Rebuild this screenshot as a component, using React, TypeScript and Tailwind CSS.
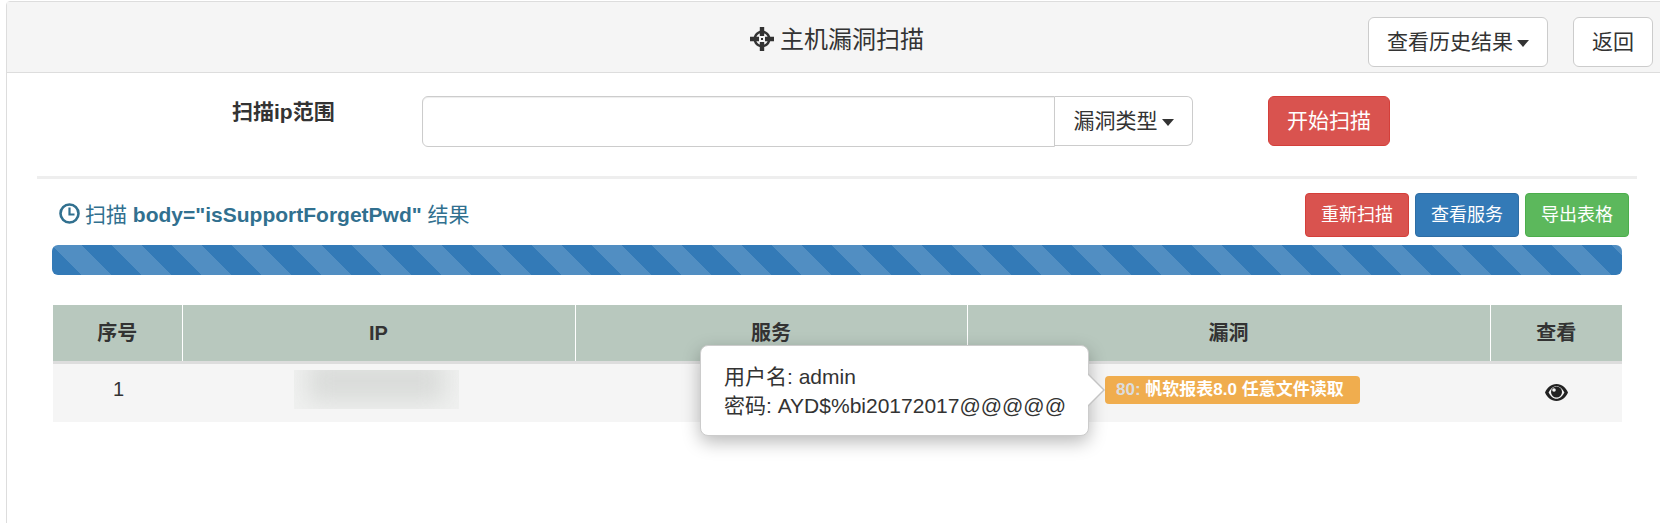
import { ReactNode } from 'react'

const FONT = "font-['Liberation_Sans','Noto_Sans_CJK_SC',sans-serif]"

function Caret() {
  return <span className="ml-1 inline-block w-0 h-0 align-middle border-x-[6px] border-x-transparent border-t-[7px] border-t-[#333]" />
}

function TargetIcon() {
  return (
    <svg width="24" height="24" viewBox="0 0 24 24" className="mt-[3px] shrink-0" fill="#333">
      <path fillRule="evenodd" d="M12 3.500a8.500 8.500 0 1 0 .01 0zM12 6a6 6 0 1 1-.01 0z" />
      <path d="M9.800 0h4.400v9h-4.400zM9.800 15h4.400v9h-4.400zM0 9.800h9v4.400H0zM15 9.800h9v4.400h-9z" />
      <rect x="11" y="11" width="2" height="2" />
    </svg>
  )
}

function ClockIcon() {
  return (
    <svg width="21" height="21" viewBox="0 0 21 21" fill="none" stroke="#31708f" className="mb-[3px] shrink-0">
      <circle cx="10.500" cy="10.500" r="9" strokeWidth="2.600" />
      <path d="M10.500 4.500V11.500H15.500" strokeWidth="2.200" />
    </svg>
  )
}

function EyeIcon() {
  return (
    <svg width="23" height="17" viewBox="0 0 23 17" fill="#222">
      <path fillRule="evenodd" d="M11.500 0C17 0 21 4 23 8.500 21 13 17 17 11.500 17S2 13 0 8.500C2 4 6 0 11.500 0zM11.500 2.200C8 2.200 5.500 4.800 3.600 8.500 5.500 12.200 8 14.800 11.500 14.800S17.500 12.200 19.400 8.500C17.500 4.800 15 2.200 11.500 2.200z" />
      <circle cx="11.500" cy="8" r="5.500" />
      <circle cx="9" cy="6" r="1.800" fill="#f5f5f5" />
    </svg>
  )
}

function ActionButton({ className, children }: { className: string; children: ReactNode }) {
  return (
    <button className={`h-[44px] w-[104px] rounded border text-lg text-white ${className}`}>
      {children}
    </button>
  )
}

const COLUMNS = [
  { label: '序号', width: 'w-[129px]' },
  { label: 'IP', width: 'w-[393px]' },
  { label: '服务', width: 'w-[392px]' },
  { label: '漏洞', width: 'w-[523px]' },
  { label: '查看', width: 'w-[132px]' },
]

export default function App() {
  return (
    <div className={`h-[523px] w-[1660px] overflow-hidden bg-white pl-[6px] pt-px text-[21px] text-[#333] ${FONT}`}>
      <div className="h-[600px] w-[1700px] rounded-tl border border-[#ddd]">
        {/* Heading */}
        <div className="relative flex h-[71px] items-center border-b border-[#ddd] bg-[#f5f5f5] pl-[743px]">
          <TargetIcon />
          <h1 className="ml-[6px] mt-[6px] text-2xl leading-none">主机漏洞扫描</h1>
          <div className="absolute left-[1361px] top-[15px] flex gap-[25px]">
            <button className="h-[50px] w-[180px] rounded-md border border-[#ccc] bg-white">
              查看历史结果
              <Caret />
            </button>
            <button className="h-[50px] w-[80px] rounded-md border border-[#ccc] bg-white">返回</button>
          </div>
        </div>

        {/* Scan form */}
        <div className="flex h-[103px] items-start pt-[23px]">
          <div className="ml-[225px] w-[190px] font-bold leading-[32px]">扫描ip范围</div>
          <input className="h-[51px] w-[633px] rounded-l-md border border-[#ccc] bg-white shadow-[inset_0_1px_1px_rgba(0,0,0,0.075)] outline-none" />
          <button className="h-[50px] w-[138px] rounded-r-md border border-l-0 border-[#ccc] bg-white">
            漏洞类型
            <Caret />
          </button>
          <button className="ml-[75px] h-[50px] w-[122px] rounded-md border border-[#d43f3a] bg-[#d9534f] text-white">
            开始扫描
          </button>
        </div>

        <div className="ml-[30px] h-[3px] w-[1600px] bg-[#eee]" />

        {/* Result title */}
        <div className="ml-[52px] mt-[14px] flex h-[44px] w-[1570px] items-center">
          <ClockIcon />
          <div className="ml-[5px] flex-1 text-[#31708f]">
            扫描 <b>body="isSupportForgetPwd"</b> 结果
          </div>
          <div className="flex gap-[6px]">
            <ActionButton className="border-[#d43f3a] bg-[#d9534f]">重新扫描</ActionButton>
            <ActionButton className="border-[#2e6da4] bg-[#337ab7]">查看服务</ActionButton>
            <ActionButton className="border-[#4cae4c] bg-[#5cb85c]">导出表格</ActionButton>
          </div>
        </div>

        {/* Progress */}
        <div className="ml-[45px] mt-[8px] h-[30px] w-[1570px] rounded-md bg-[#337ab7] bg-[linear-gradient(45deg,rgba(255,255,255,0.15)_25%,transparent_25%,transparent_50%,rgba(255,255,255,0.15)_50%,rgba(255,255,255,0.15)_75%,transparent_75%,transparent)] bg-size-[60px_60px]" />

        {/* Results */}
        <div className="relative ml-[46px] mt-[30px] w-[1569px]">
          <table className="w-full table-fixed border-collapse text-[20px]">
            <thead>
              <tr className="bg-[#b8c8be]">
                {COLUMNS.map((col, i) => (
                  <th
                    key={col.label}
                    className={`h-[57px] border-b-[3px] border-b-[#ddd] font-bold ${col.width} ${i > 0 ? 'border-l border-l-white' : ''}`}
                  >
                    {col.label}
                  </th>
                ))}
              </tr>
            </thead>
            <tbody>
              <tr className="h-[60px] bg-[#f5f5f5] text-center">
                <td className="pb-[8px] pl-[2px]">1</td>
                <td className="pb-[7px]">
                  <div className="relative ml-[112px] h-[39px] w-[165px] overflow-hidden bg-[#f0f1f0]">
                    <div className="absolute -top-[10px] bottom-[7px] left-[14px] right-[14px] bg-[#d9dbd9] blur-[12px]" />
                  </div>
                </td>
                <td />
                <td className="pb-[4px] pl-[138px] text-left">
                  <span className="inline-block h-[28px] w-[255px] rounded bg-[#f0ad4e] pl-[11px] align-top text-[17px] leading-[28px] font-bold text-white">
                    <span className="text-[#ddd]">80:</span> 帆软报表8.0 任意文件读取
                  </span>
                </td>
                <td>
                  <div className="flex justify-center">
                    <EyeIcon />
                  </div>
                </td>
              </tr>
            </tbody>
          </table>

          {/* Popover */}
          <div className="absolute left-[647px] top-[40px] h-[91px] w-[389px] rounded-lg border border-[#ccc] bg-white py-[16px] pl-[23px] leading-[29px] shadow-[0_6px_18px_rgba(0,0,0,0.28)]">
            <div>用户名: admin</div>
            <div>密码: AYD$%bi20172017@@@@@</div>
            <div className="absolute -right-[17px] top-[27px] h-0 w-0 border-y-[17px] border-l-[17px] border-y-transparent border-l-[#c4c4c4]" />
            <div className="absolute -right-[15px] top-[28px] h-0 w-0 border-y-[16px] border-l-[16px] border-y-transparent border-l-white" />
          </div>
        </div>
      </div>
    </div>
  )
}
